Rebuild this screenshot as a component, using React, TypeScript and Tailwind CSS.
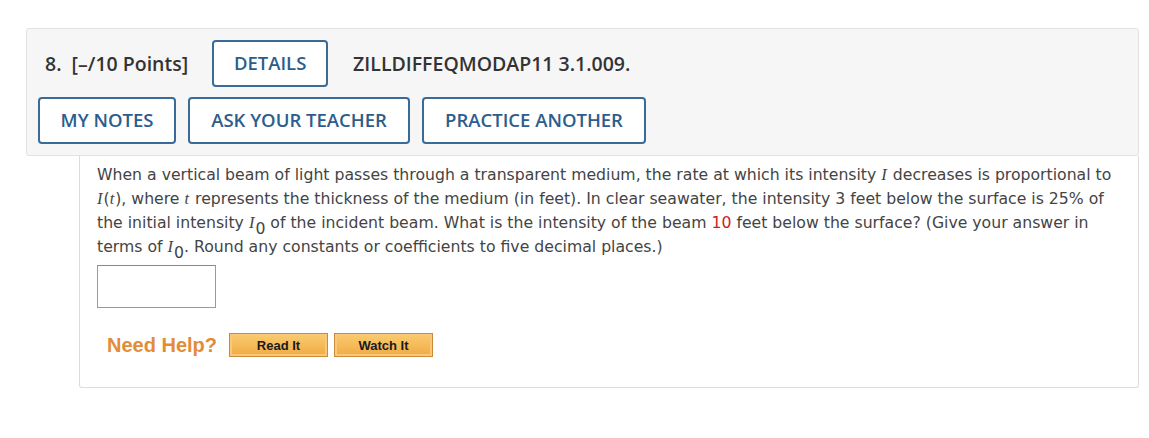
import React from 'react';

const outlineBtn =
  "h-[47px] px-[19px] flex items-center justify-center rounded-[4px] border-2 border-[#3a6a98] bg-white text-[#2c5d8c] text-[18.5px] font-semibold font-['Open_Sans',sans-serif] leading-none";

const helpBtn =
  "h-[24px] w-[99px] flex items-center justify-center border border-[#c98a3a] bg-gradient-to-b from-[#f9cb6e] to-[#f1aa45] shadow-[inset_0_0_0_2px_#f8c878] text-[13px] font-bold text-[#1a1a1a] font-['Liberation_Sans',Arial,sans-serif] leading-none";

const Mi = ({ children }: { children: React.ReactNode }) => (
  <i className="font-['Liberation_Serif',serif] text-[16.5px] pr-[1px]">{children}</i>
);

const Sub0 = () => <span className="relative top-[6px] text-[15.7px] leading-none">0</span>;

export default function App() {
  return (
    <div className="w-[1149px] h-[438px] bg-white pt-[28px] pl-[26px] pr-[10px]">
      <div className="border border-[#e2e2e2] rounded-[3px] bg-[#f6f6f6] pt-[11px] pb-[11px] pl-[11px]">
        <div className="flex items-center h-[47px]">
          <span className="ml-[7px] text-[19.5px] font-semibold text-[#333] font-['Open_Sans',sans-serif] whitespace-pre">
            8.  [–/10 Points]
          </span>
          <button className={outlineBtn + ' ml-[24px] w-[116px]'}>DETAILS</button>
          <span className="ml-[25px] text-[19.5px] font-semibold text-[#333] font-['Open_Sans',sans-serif]">
            ZILLDIFFEQMODAP11 3.1.009.
          </span>
        </div>
        <div className="flex items-center gap-[12px] mt-[10px]">
          <button className={outlineBtn + ' w-[138px]'}>MY NOTES</button>
          <button className={outlineBtn + ' w-[222px]'}>ASK YOUR TEACHER</button>
          <button className={outlineBtn + ' w-[224px]'}>PRACTICE ANOTHER</button>
        </div>
      </div>
      <div className="ml-[53px] border border-t-0 border-[#dcdcdc] rounded-b-[3px] h-[232px] pl-[17px] pt-[7px]">
        <p className="text-[15.7px] leading-[24px] text-[#444] font-['DejaVu_Sans',Verdana,sans-serif] pr-[20px]">
          When a vertical beam of light passes through a transparent medium, the rate at which its intensity <Mi>I</Mi>{' '}
          decreases is proportional to <Mi>I</Mi>(<Mi>t</Mi>), where <Mi>t</Mi> represents the thickness of the medium (in
          feet). In clear seawater, the intensity 3 feet below the surface is 25% of the initial intensity{' '}
          <Mi>I</Mi>
          <Sub0 /> of the incident beam. What is the intensity of the beam{' '}
          <span className="text-[#d0201b]">10</span> feet below the surface? (Give your answer in terms of <Mi>I</Mi>
          <Sub0 />. Round any constants or coefficients to five decimal places.)
        </p>
        <div className="mt-[6px] w-[119px] h-[43px] border border-[#9a9a9a] border-t-[#8a8a8a]"></div>
        <div className="flex items-center mt-[22px] ml-[10px]">
          <span className="text-[20px] font-bold text-[#e38c37] font-['Liberation_Sans',Arial,sans-serif] mr-[12px]">
            Need Help?
          </span>
          <button className={helpBtn}>Read It</button>
          <button className={helpBtn + ' ml-[6px]'}>Watch It</button>
        </div>
      </div>
    </div>
  );
}
